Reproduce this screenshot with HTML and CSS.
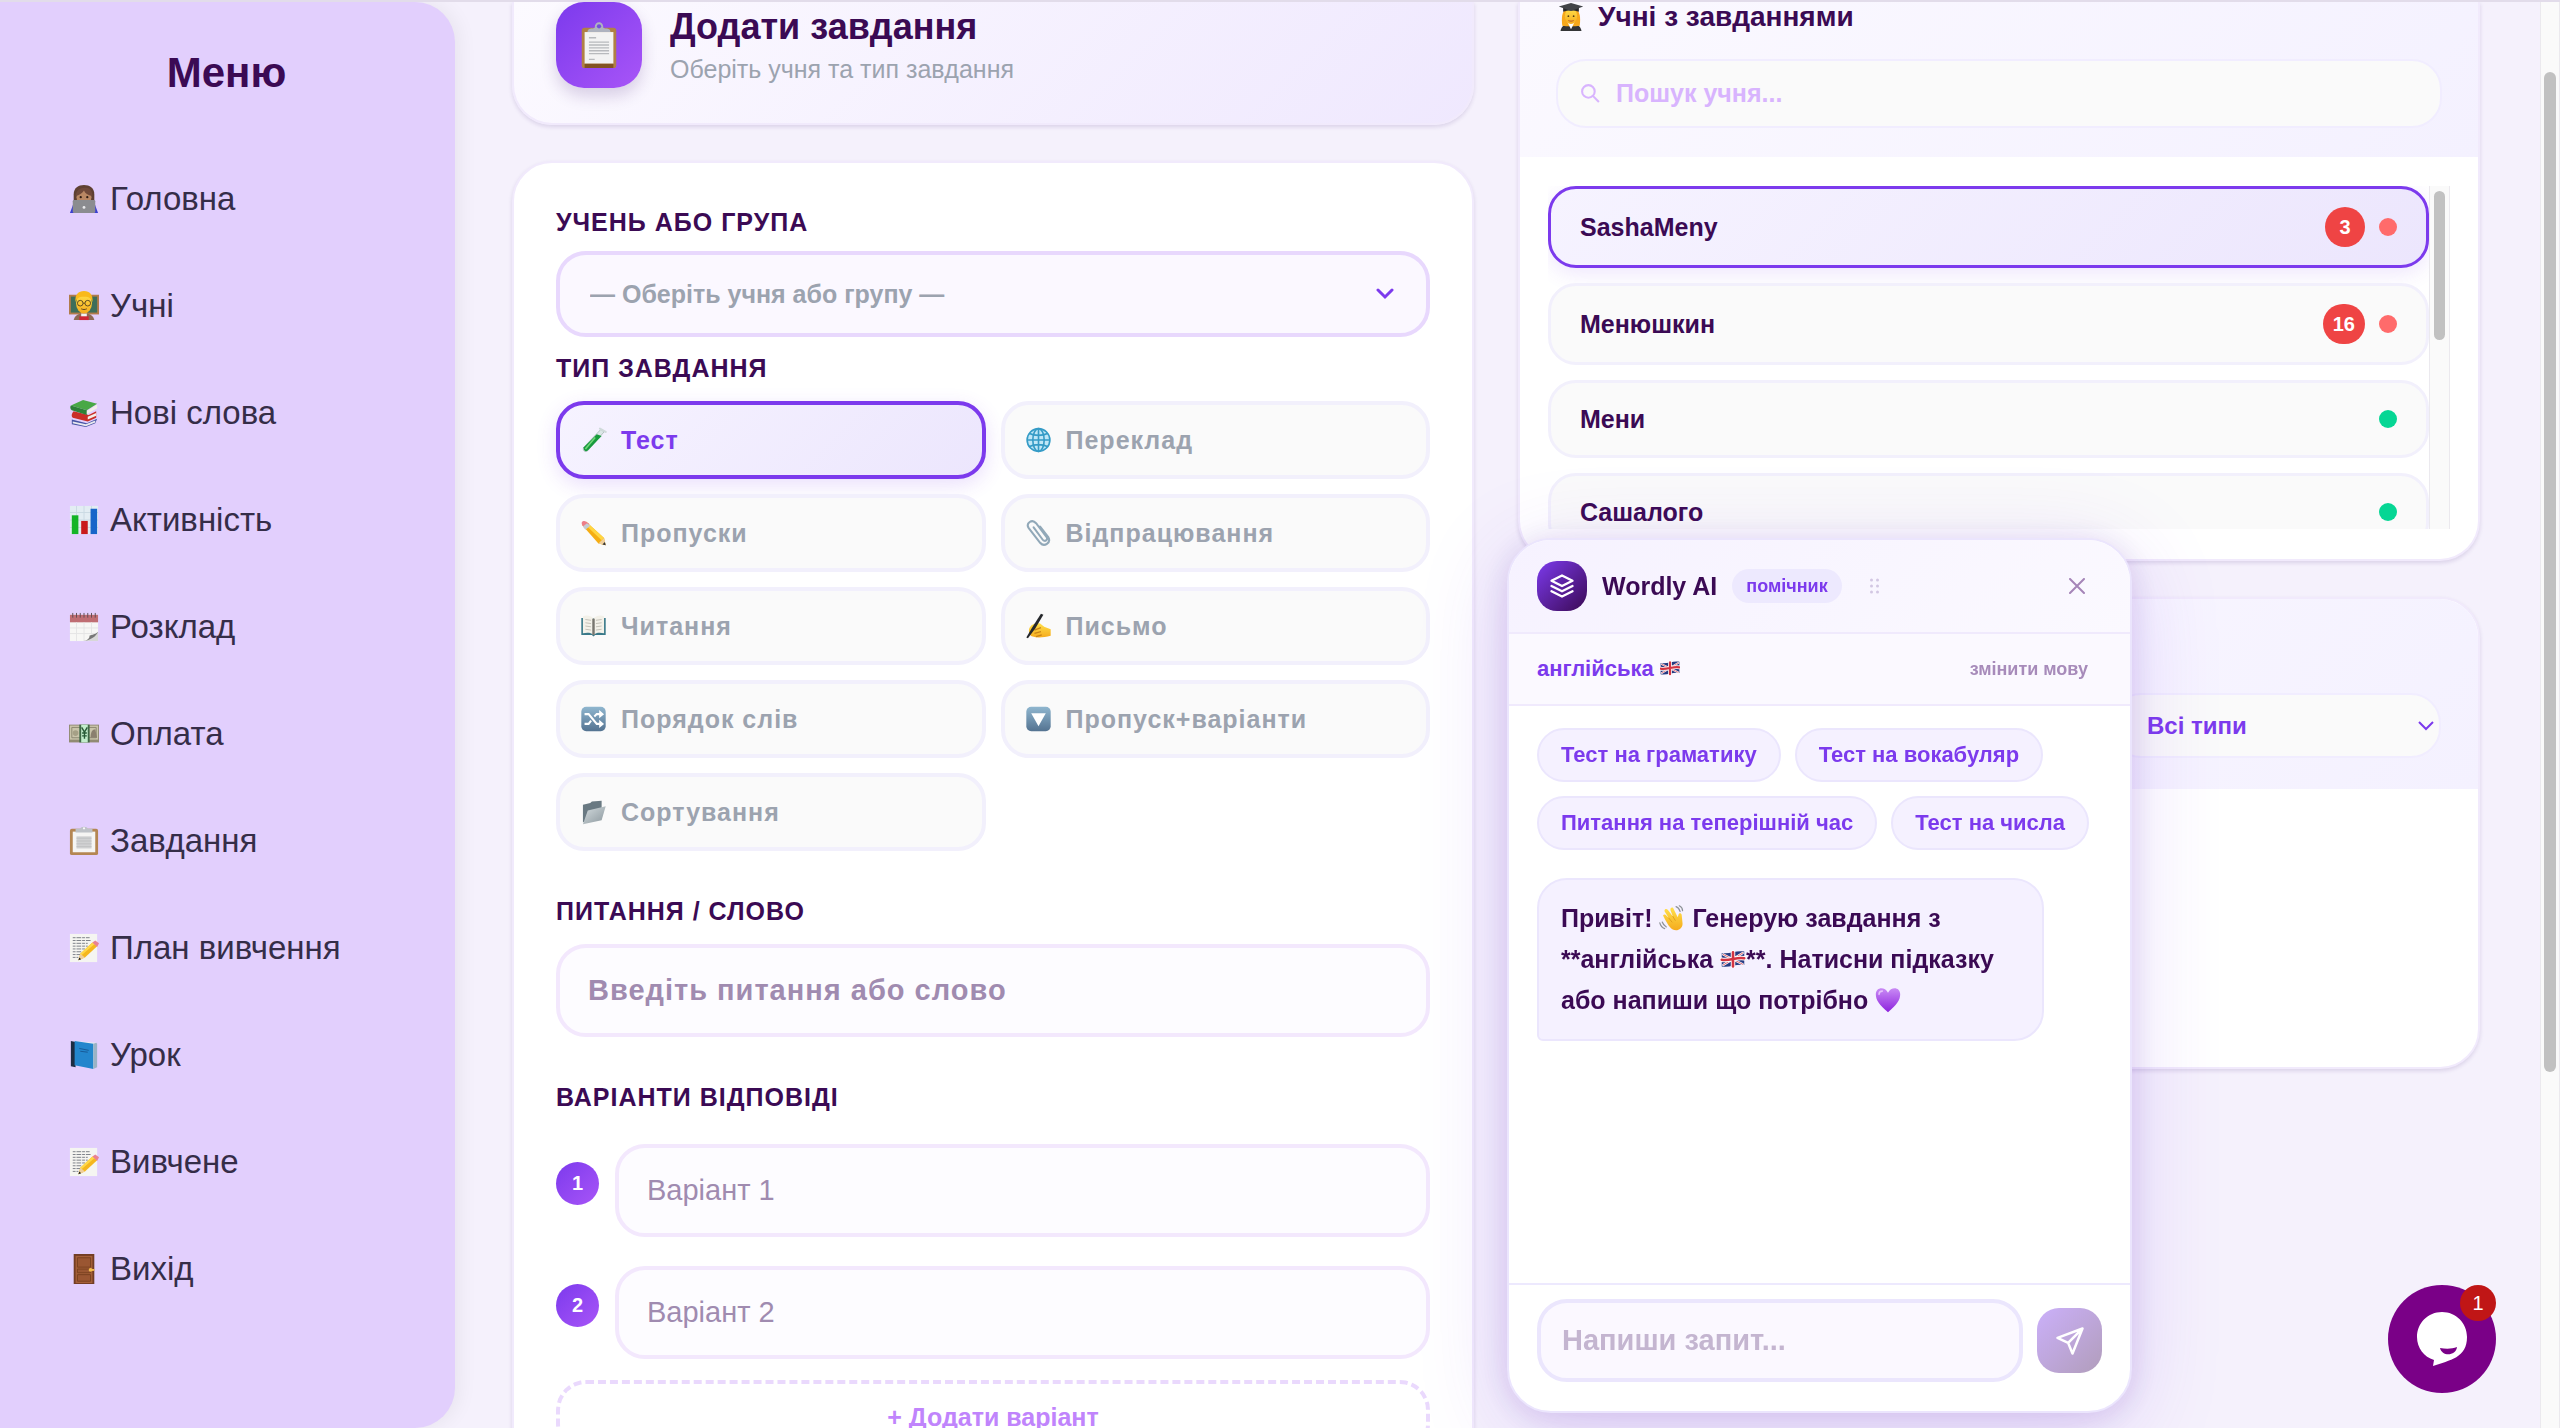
FILE: index.html
```html
<!DOCTYPE html>
<html lang="uk">
<head>
  <meta charset="UTF-8">
  <title>Завдання</title>
  <link rel="stylesheet" href="styles.css">
</head>
<body>
  <!-- Іконки -->
  <svg class="sprite" aria-hidden="true">
    <defs>
      <linearGradient id="g-skin" x1="0" y1="0" x2="0" y2="1"><stop offset="0" stop-color="#ffe04a"/><stop offset="1" stop-color="#f5ab1d"/></linearGradient>
      <linearGradient id="g-steel" x1="0" y1="0" x2="0" y2="1"><stop offset="0" stop-color="#8fb6cf"/><stop offset="1" stop-color="#547391"/></linearGradient>
      <linearGradient id="g-folder" x1="0" y1="0" x2="1" y2="1"><stop offset="0" stop-color="#d5dde0"/><stop offset="1" stop-color="#8b979d"/></linearGradient>
      <linearGradient id="g-heart" x1="0" y1="0" x2="0" y2="1"><stop offset="0" stop-color="#c98af5"/><stop offset="1" stop-color="#8d22dd"/></linearGradient>
    </defs>
    <symbol id="i-home" viewBox="0 0 32 32">
      <path d="M1 31l3-8 5-4h14l5 4 3 8z" fill="#3a3fd0"/>
      <path d="M5 18V11C5 4 10 1 16 1s11 3 11 10v7z" fill="#5f4032"/>
      <ellipse cx="16" cy="14" rx="8" ry="9" fill="#b98764"/>
      <path d="M7 13C8 5 13 4 18 4c5 0 7 4 7 9-5-1-8-3-9-6-2 3-5 5-9 6z" fill="#70493a"/>
      <circle cx="12.500" cy="14" r="1.200" fill="#2c1a12"/><circle cx="19.500" cy="14" r="1.200" fill="#2c1a12"/>
      <rect x="4" y="17" width="24" height="14" rx="1.500" fill="#8b8c90"/>
      <circle cx="16" cy="25" r="1.500" fill="#e9e9ec"/>
    </symbol>
    <symbol id="i-teacher" viewBox="0 0 32 32">
      <rect x="0" y="4" width="32" height="21" fill="#b17b4b"/>
      <rect x="2" y="6" width="28" height="17" fill="#3d6e5a"/>
      <path d="M5 31c1-5 5-7 11-7s10 2 11 7z" fill="#8d6a55"/>
      <path d="M13 24h6v7h-6z" fill="#f2f2f2"/><rect x="11" y="27" width="10" height="4" fill="#cf2635"/>
      <ellipse cx="16" cy="13" rx="8.500" ry="11" fill="url(#g-skin)"/>
      <path d="M7 12C6 4 10 0 16 0s10 4 9 12c-1-4-3-6-9-6s-8 2-9 6z" fill="#f9b91b"/>
      <g fill="none" stroke="#5a4420" stroke-width="1"><circle cx="12" cy="13" r="3"/><circle cx="20" cy="13" r="3"/><path d="M15 13h2M13 19c2 1 4 1 6 0"/></g>
    </symbol>
    <symbol id="i-books" viewBox="0 0 32 32">
      <path d="M3 23l16 4 11-5-2 5-10 4-15-3z" fill="#4754a5"/>
      <path d="M4 25l14 3 10-4v2l-10 4-14-3z" fill="#e9e9ef"/>
      <path d="M5 14l16 4 8-4v7l-9 4-16-4c-2-2-1-5 1-7z" fill="#c92d27"/>
      <path d="M20 20l9-4v3l-9 4z" fill="#f3efe9"/>
      <path d="M2 8L15 2l15 4-11 7z" fill="#48a845"/>
      <path d="M2 8l17 5v5L3 13c-2-1-2-4-1-5z" fill="#2d8137"/>
      <path d="M19 14l11-7v4l-11 6z" fill="#f3efe9"/>
    </symbol>
    <symbol id="i-chart" viewBox="0 0 32 32">
      <rect x="1" y="1" width="30" height="30" fill="#e3edf3"/>
      <path d="M1 8h30M1 16h30M1 24h30M8 1v30M16 1v30M24 1v30" stroke="#cadae2"/>
      <rect x="3" y="11" width="7" height="20" fill="#14b427"/><rect x="13" y="17" width="7" height="14" fill="#c91b1d"/><rect x="23" y="4" width="7" height="27" fill="#1765c9"/>
    </symbol>
    <symbol id="i-calendar" viewBox="0 0 32 32">
      <rect x="1" y="3" width="30" height="28" fill="#f7f7f5"/>
      <path d="M1 3h30v8H1z" fill="#bf6d73"/>
      <path d="M4 1v5M8 1v5M12 1v5M16 1v5M20 1v5M24 1v5M28 1v5" stroke="#5d4b51"/>
      <path d="M1 17h30M1 23h30M8 11v20M16 11v20M24 11v20" stroke="#e4e4e4"/>
      <path d="M15 31c8-1 9-4 16-10v10z" fill="#d7d7d7"/><path d="M16 31c8-2 12-4 15-10-3 3-6 3-9 4 0 3-2 5-6 6z" fill="#777"/>
    </symbol>
    <symbol id="i-money" viewBox="0 0 32 32">
      <path d="M0 6h32v19H0z" fill="#918b73"/><path d="M1 7h30v15H1z" fill="#c9c4aa"/>
      <path d="M3 9h26v11H3z" fill="none" stroke="#8a866f"/>
      <circle cx="7" cy="15" r="3" fill="#a5a086"/><path d="M23 20c0-6 2-9 5-9l2 9z" fill="#8b806f"/>
      <path d="M11 6h11v19H11z" fill="#3e6846"/><path d="M13 6h7v19h-7z" fill="#c2edcb"/>
      <path d="M13.500 9l3 5 3-5M16.500 14v7M14 15h5M14 18h5" fill="none" stroke="#285b37" stroke-width="1.500"/>
    </symbol>
    <symbol id="i-clipboard" viewBox="0 0 32 32">
      <rect x="1" y="3" width="30" height="28" rx="2" fill="#b48652"/>
      <rect x="4" y="6" width="24" height="22" fill="#f5f5f3"/>
      <path d="M8 11h16v13H8z" fill="#d0d1d2"/><path d="M8 13h16M8 16h16M8 19h16M8 22h16" stroke="#bfc0c1"/>
      <path d="M7 3h5c0-3 8-3 8 0h5v4H7z" fill="#bec2c7"/><circle cx="16" cy="2.500" r="1.200" fill="#f8f8f8"/>
    </symbol>
    <symbol id="i-board" viewBox="0 0 32 32">
      <rect x="4" y="4" width="24" height="28" rx="2" fill="#b08045"/><rect x="6" y="7" width="20" height="22" fill="#f3f3f3"/>
      <path d="M6 29h20v3H6z" fill="#835322"/>
      <path d="M9 11h5M9 14h14M9 16h14M9 18h14M9 20h14M9 22h14M9 26h4" stroke="#b8babd"/>
      <path d="M8 7c0-3 3-2 5-3 0-5 6-5 6 0 2 1 5 0 5 3z" fill="#aeb3bf"/><circle cx="16" cy="3" r="1.500" fill="#7350d9"/>
    </symbol>
    <symbol id="i-memo" viewBox="0 0 32 32">
      <rect x="1" y="1" width="29" height="30" fill="#f5f5f1"/>
      <path d="M4 5h18M4 8h20M4 11h16M4 14h16M4 17h13M4 20h9M4 23h8M4 26h6" stroke="#777c83" stroke-dasharray="3 1 5 1"/>
      <path d="M10 29l2-7L25 10l5 4-13 12z" fill="#f5b71e"/><path d="M12 22L25 10l2 2-14 12z" fill="#ffd849"/>
      <path d="M25 10l3-2 4 3-2 4z" fill="#e98192"/><path d="M10 29l2-7 5 4z" fill="#efcf9b"/><path d="M10 29l1-3 2 2z" fill="#222"/>
    </symbol>
    <symbol id="i-book" viewBox="0 0 32 32">
      <path d="M2 1l5 1v27l-5-1z" fill="#1c2d43"/><path d="M6 1l23 2v26l-3 2z" fill="#e9edf0"/>
      <path d="M6 1l20 3v27L6 27z" fill="#2386cd"/><path d="M26 4l3-1 1 1v25l-4 2z" fill="#9bb3c5"/>
      <path d="M11 9l10 2M12 12l8 1" stroke="#165894"/>
    </symbol>
    <symbol id="i-door" viewBox="0 0 32 32">
      <path d="M5 0h22v32H5z" fill="#733d24"/><path d="M7 2h18v29H7z" fill="#a45f39"/>
      <path d="M9 4h14v10H9zM9 16h14v4H9zM9 22h14v7H9z" fill="#9a5632" stroke="#77401f"/>
      <path d="M22 17h5" stroke="#f4bd4e" stroke-width="2"/><circle cx="23" cy="17" r="2" fill="#f4bd4e"/>
    </symbol>
    <symbol id="i-tube" viewBox="0 0 32 32">
      <path d="M25 3l4 3L9 29c-3 3-7 0-5-4z" fill="#dce7e7" stroke="#a9b8b8"/>
      <path d="M20 9l6 2L9 29c-3 2-6 0-5-4z" fill="#189b3d"/><path d="M18 13L6 27" stroke="#71d779" stroke-width="2"/>
      <path d="M24 2l7 4" stroke="#d0dada" stroke-width="2.500" stroke-linecap="round"/>
    </symbol>
    <symbol id="i-globe" viewBox="0 0 32 32">
      <circle cx="16" cy="16" r="14.500" fill="#bfe7f7"/>
      <g fill="none" stroke="#359bc6" stroke-width="2"><circle cx="16" cy="16" r="14"/><ellipse cx="16" cy="16" rx="7" ry="14"/><path d="M16 2v28M2 16h28M5 8c6 3 16 3 22 0M5 24c6-3 16-3 22 0"/></g>
    </symbol>
    <symbol id="i-pencil" viewBox="0 0 32 32">
      <path d="M2 6l5-4 22 20 2 9-9-2z" fill="#f5ad13"/><path d="M7 2l22 20-3 3L4 4z" fill="#ffd540"/>
      <path d="M2 6C0 2 4 0 7 2l4 3-6 5z" fill="#ed7d88"/><path d="M8 4l4 3-6 5-3-4z" fill="#c5cbd1"/>
      <path d="M22 29l7-7 2 9z" fill="#efcf9c"/><path d="M27 30l3-3 1 4z" fill="#333"/>
    </symbol>
    <symbol id="i-clip" viewBox="0 0 32 32">
      <path d="M10 9l11 15c3 4 7 0 5-3L13 4C8-2 0 4 4 10l14 18c5 6 14 0 10-7L18 8" fill="none" stroke="#91a8b8" stroke-width="2.500" stroke-linecap="round"/>
    </symbol>
    <symbol id="i-open" viewBox="0 0 32 32">
      <path d="M1 6h30v21H18l-2 2-2-2H1z" fill="#397989"/><path d="M3 4c6-2 11 0 13 3v20c-3-3-8-3-13-2zM29 4c-6-2-11 0-13 3v20c3-3 8-3 13-2z" fill="#f3f1e9"/>
      <path d="M16 7v20" stroke="#77756f" stroke-width="3"/><path d="M6 8l7 1M6 12l7 1M6 16l7 1M6 20l7 1M26 8l-7 1M26 12l-7 1M26 16l-7 1M26 20l-7 1" stroke="#b9b6ad"/>
    </symbol>
    <symbol id="i-write" viewBox="0 0 32 32">
      <path d="M5 18c3-5 9-6 13-5l5 4 8 3v8c-8 2-16 3-22 1-4-1-6-7-4-11z" fill="url(#g-skin)"/>
      <path d="M11 21l8-3M11 25l8-2M13 29l7-2" stroke="#c98317" stroke-width="1.500"/>
      <path d="M19 1l3 1-10 17-9 12-2-1 7-12z" fill="#25272b"/>
    </symbol>
    <symbol id="i-shuffle" viewBox="0 0 32 32">
      <rect x="1" y="1" width="30" height="30" rx="6" fill="url(#g-steel)"/>
      <path d="M5 10h5l10 12h4M5 22h5l3-4M17 13l3-3h4" fill="none" stroke="#fff" stroke-width="2.500"/><path d="M23 5l6 5-6 5zM23 17l6 5-6 5z" fill="#fff"/>
    </symbol>
    <symbol id="i-down" viewBox="0 0 32 32">
      <rect x="1" y="1" width="30" height="30" rx="6" fill="url(#g-steel)"/><path d="M7 9h18l-9 16z" fill="#fff"/>
    </symbol>
    <symbol id="i-folder" viewBox="0 0 32 32">
      <path d="M3 7l9-2 2-2 12-1v11L3 29z" fill="#697982"/><path d="M9 14l22-5-5 17L3 31z" fill="url(#g-folder)"/>
    </symbol>
    <symbol id="i-graduate" viewBox="0 0 32 32">
      <path d="M4 32c1-6 5-8 12-8s11 2 12 8z" fill="#343537"/><path d="M6 26C5 16 5 6 16 6s11 10 10 20c-5 1-15 1-20 0z" fill="#f7a81b"/>
      <path d="M12 22h8l-4 8z" fill="#fff"/><ellipse cx="16" cy="15" rx="7" ry="9" fill="url(#g-skin)"/>
      <path d="M7 4h18v6c-5-2-13-2-18 0z" fill="#292a2d"/><path d="M16 0l14 4-14 5L2 4z" fill="#424448"/>
      <circle cx="13" cy="15" r="1" fill="#543b10"/><circle cx="19" cy="15" r="1" fill="#543b10"/><path d="M13 20c2 1 4 1 6 0" stroke="#ac482c" fill="none"/>
    </symbol>
    <symbol id="i-flag" viewBox="0 0 32 24">
      <path d="M1 4c10 2 20-4 30-2v18c-10-2-20 4-30 2z" fill="#263b82"/>
      <path d="M3 6l26 13M3 20L29 4" stroke="#fff" stroke-width="3"/><path d="M3 6l26 13M3 20L29 4" stroke="#d43442" stroke-width="1"/>
      <path d="M16 3v19M1 13c10 2 20-4 30-2" fill="none" stroke="#fff" stroke-width="6"/><path d="M16 3v19M1 13c10 2 20-4 30-2" fill="none" stroke="#d43442" stroke-width="3.500"/>
    </symbol>
    <symbol id="i-wave" viewBox="0 0 32 32">
      <path d="M5 13c1-2 3-1 4 0l3 3L7 8c-1-3 2-4 4-2l6 8-3-8c0-3 3-4 4-1l5 10 1-3c1-3 4-2 4 1l1 10c0 5-4 8-8 8-6 0-9-4-16-18z" fill="url(#g-skin)"/>
      <path d="M12 16l4 5M17 14l3 5" stroke="#dc971a"/><path d="M21 2c3 1 4 3 5 6M25 1c2 1 4 4 4 6M1 22c1 4 3 6 6 7M4 21c1 3 3 5 5 6" fill="none" stroke="#8d9297" stroke-width="1.500"/>
    </symbol>
    <symbol id="i-heart" viewBox="0 0 32 32">
      <path d="M16 31C5 22 1 16 1 9 1 0 12-1 16 7c4-8 15-7 15 2 0 7-4 13-15 22z" fill="url(#g-heart)"/><path d="M5 9c0-3 2-4 4-4" fill="none" stroke="#e5c2fc" stroke-width="2" stroke-linecap="round"/>
    </symbol>
  </svg>

  <div class="page">
    <nav class="sidebar">
      <h2 class="sidebar-title">Меню</h2>
      <ul class="menu">
        <li><a href="#"><svg class="emoji"><use href="#i-home"/></svg>Головна</a></li>
        <li><a href="#"><svg class="emoji"><use href="#i-teacher"/></svg>Учні</a></li>
        <li><a href="#"><svg class="emoji"><use href="#i-books"/></svg>Нові слова</a></li>
        <li><a href="#"><svg class="emoji"><use href="#i-chart"/></svg>Активність</a></li>
        <li><a href="#"><svg class="emoji"><use href="#i-calendar"/></svg>Розклад</a></li>
        <li><a href="#"><svg class="emoji"><use href="#i-money"/></svg>Оплата</a></li>
        <li><a href="#"><svg class="emoji"><use href="#i-clipboard"/></svg>Завдання</a></li>
        <li><a href="#"><svg class="emoji"><use href="#i-memo"/></svg>План вивчення</a></li>
        <li><a href="#"><svg class="emoji"><use href="#i-book"/></svg>Урок</a></li>
        <li><a href="#"><svg class="emoji"><use href="#i-memo"/></svg>Вивчене</a></li>
        <li><a href="#"><svg class="emoji"><use href="#i-door"/></svg>Вихід</a></li>
      </ul>
    </nav>

    <main class="content">
      <div class="column">
        <header class="card card-top task-header">
          <div class="task-icon"><svg><use href="#i-board"/></svg></div>
          <div>
            <h1>Додати завдання</h1>
            <p>Оберіть учня та тип завдання</p>
          </div>
        </header>

        <form class="card task-form">
          <label class="label" for="student">УЧЕНЬ АБО ГРУПА</label>
          <select class="field student-select" id="student">
            <option>— Оберіть учня або групу —</option>
          </select>

          <h3 class="label label-type">ТИП ЗАВДАННЯ</h3>
          <div class="types">
            <button type="button" class="type active"><svg><use href="#i-tube"/></svg>Тест</button>
            <button type="button" class="type"><svg><use href="#i-globe"/></svg>Переклад</button>
            <button type="button" class="type"><svg><use href="#i-pencil"/></svg>Пропуски</button>
            <button type="button" class="type"><svg><use href="#i-clip"/></svg>Відпрацювання</button>
            <button type="button" class="type"><svg><use href="#i-open"/></svg>Читання</button>
            <button type="button" class="type"><svg><use href="#i-write"/></svg>Письмо</button>
            <button type="button" class="type"><svg><use href="#i-shuffle"/></svg>Порядок слів</button>
            <button type="button" class="type"><svg><use href="#i-down"/></svg>Пропуск+варіанти</button>
            <button type="button" class="type"><svg><use href="#i-folder"/></svg>Сортування</button>
          </div>

          <label class="label label-section" for="question">ПИТАННЯ / СЛОВО</label>
          <input class="field question" id="question" type="text" placeholder="Введіть питання або слово">

          <h3 class="label label-section">ВАРІАНТИ ВІДПОВІДІ</h3>
          <div class="answers">
            <div class="answer">
              <label class="num" for="answer1">1</label>
              <input class="field" id="answer1" type="text" placeholder="Варіант 1">
            </div>
            <div class="answer">
              <label class="num" for="answer2">2</label>
              <input class="field" id="answer2" type="text" placeholder="Варіант 2">
            </div>
          </div>
          <button type="button" class="add-answer">+ Додати варіант</button>
        </form>
      </div>

      <div class="column">
        <section class="card card-top">
          <div class="panel-header">
            <h2><svg><use href="#i-graduate"/></svg>Учні з завданнями</h2>
            <label class="search">
              <svg viewBox="0 0 20 20"><circle cx="8" cy="8" r="6"/><path d="M12.500 12.500L18 18"/></svg>
              <input type="search" aria-label="Пошук учня" placeholder="Пошук учня...">
            </label>
          </div>
          <div class="students">
            <ul class="student-list">
              <li class="student selected"><span class="name">SashaMeny</span><span class="count">3</span><span class="dot"></span></li>
              <li class="student"><span class="name">Менюшкин</span><span class="count">16</span><span class="dot"></span></li>
              <li class="student"><span class="name">Мени</span><span class="dot green"></span></li>
              <li class="student"><span class="name">Сашалого</span><span class="dot green"></span></li>
            </ul>
            <div class="track"><div class="thumb"></div></div>
          </div>
        </section>

        <section class="card results">
          <div class="results-header">
            <select class="type-filter" aria-label="Тип завдання">
              <option>Всі типи</option>
            </select>
          </div>
        </section>
      </div>
    </main>

    <div class="track page-track"><div class="thumb"></div></div>
  </div>

  <!-- AI помічник -->
  <aside class="ai">
    <header class="ai-header">
      <div class="ai-logo">
        <svg viewBox="0 0 24 24"><path d="M12 3L3 7.500l9 4.500 9-4.500zM3 12l9 4.500 9-4.500M3 16.500l9 4.500 9-4.500"/></svg>
      </div>
      <h2>Wordly AI</h2>
      <span class="ai-badge">помічник</span>
      <svg class="drag" viewBox="0 0 10 16"><circle cx="2" cy="2" r="1.500"/><circle cx="8" cy="2" r="1.500"/><circle cx="2" cy="8" r="1.500"/><circle cx="8" cy="8" r="1.500"/><circle cx="2" cy="14" r="1.500"/><circle cx="8" cy="14" r="1.500"/></svg>
      <button type="button" class="close" aria-label="Закрити"><svg viewBox="0 0 16 16"><path d="M1 1l14 14M15 1L1 15"/></svg></button>
    </header>
    <div class="ai-lang">
      <span>англійська <svg><use href="#i-flag"/></svg></span>
      <button type="button">змінити мову</button>
    </div>
    <div class="ai-body">
      <div class="chips">
        <button type="button">Тест на граматику</button>
        <button type="button">Тест на вокабуляр</button>
        <button type="button">Питання на теперішній час</button>
        <button type="button">Тест на числа</button>
      </div>
      <p class="message">Привіт! <svg class="mark"><use href="#i-wave"/></svg> Генерую завдання з<br>**англійська <svg class="mark flag"><use href="#i-flag"/></svg>**. Натисни підказку<br>або напиши що потрібно <svg class="mark"><use href="#i-heart"/></svg></p>
    </div>
    <form class="ai-form">
      <input type="text" aria-label="Запит" placeholder="Напиши запит...">
      <button type="button" aria-label="Надіслати">
        <svg viewBox="0 0 24 24"><path d="M22 2L2 9.500l8.500 4L14 22zM22 2L10.500 13.500"/></svg>
      </button>
    </form>
  </aside>

  <button type="button" class="chat" aria-label="Чат">
    <svg viewBox="0 0 108 108">
      <path d="M54 27c14 0 25 11 25 25 0 21-17 23-34 29l1-6C36 72 29 63 29 52c0-14 11-25 25-25z" fill="#fff"/>
      <path d="M52 63c6 1 12 1 17-1-1 9-15 10-17 1z" fill="#7a0087"/>
    </svg>
    <span class="chat-count">1</span>
  </button>
</body>
</html>
```

FILE: styles.css
```css
* {
  box-sizing: border-box;
}
body {
  margin: 0;
  overflow: hidden;
  background-color: #f5f1fc;
  color: #3b0a54;
  font-family: "Liberation Sans", Arial, sans-serif;
  font-size: 25px;
}
h1, h2, h3, p, ul {
  margin: 0;
  padding: 0;
}
ul {
  list-style: none;
}
button, input, select {
  font-family: inherit;
  font-size: inherit;
  font-weight: bold;
}
button {
  cursor: pointer;
}
.sprite {
  position: absolute;
  width: 0;
  height: 0;
}
.page {
  display: grid;
  grid-template-columns: 455px 1fr 20px;
  grid-template-rows: 100%;
  height: 100vh;
  border-top: 2px solid #e2dcea;
  overflow: hidden;
}

/* Меню */
.sidebar {
  padding: 45px 68px 45px 66px;
  background-color: #e2cffd;
  border-radius: 0 40px 40px 0;
  box-shadow: 4px 0 20px rgba(0, 0, 0, 0.06);
}
.sidebar-title {
  margin-bottom: 75px;
  font-size: 42px;
  line-height: 52px;
  text-align: center;
}
.menu {
  display: grid;
  gap: 57px;
}
.menu a {
  display: flex;
  align-items: center;
  gap: 8px;
  color: #352d48;
  font-size: 33px;
  line-height: 50px;
  text-decoration: none;
  white-space: nowrap;
}
.emoji {
  width: 36px;
  height: 30px;
}

/* Основна частина */
.content {
  display: grid;
  grid-template-columns: 1fr 1fr;
  gap: 44px;
  min-height: 0;
  padding: 0 60px 0 57px;
}
.column {
  min-width: 0;
}
.card {
  background-color: #fff;
  border: 2px solid #f1eafc;
  border-radius: 40px;
  box-shadow: 0 2px 4px rgba(60, 20, 110, 0.14);
  overflow: hidden;
}
.card-top {
  border-top: 0;
  border-radius: 0 0 40px 40px;
}
.task-header {
  display: flex;
  align-items: flex-start;
  gap: 28px;
  padding: 0 42px 35px;
  background: linear-gradient(135deg, #fcfaff, #efe8fe);
}
.task-icon {
  display: grid;
  place-items: center;
  width: 86px;
  height: 86px;
  background: linear-gradient(135deg, #7c3aed, #a855f7);
  border-radius: 28px;
  box-shadow: 0 8px 16px rgba(60, 20, 110, 0.18);
}
.task-icon svg {
  width: 46px;
  height: 46px;
}
.task-header h1 {
  font-size: 36px;
  line-height: 50px;
}
.task-header p {
  color: #9ca3af;
  line-height: 34px;
}
.task-form {
  margin-top: 36px;
  padding: 44px 42px;
}
.label {
  display: block;
  margin-bottom: 14px;
  font-size: 25px;
  font-weight: bold;
  letter-spacing: 1px;
  line-height: 30px;
}
.field {
  display: block;
  width: 100%;
  padding: 0 30px;
  background-color: #fdfcff;
  border: 4px solid #f3e8fd;
  border-radius: 30px;
  color: #3b0a54;
  font-size: 29px;
  font-weight: normal;
  line-height: 33px;
}
input.field {
  height: 93px;
  padding: 0 28px;
}
.field::placeholder {
  color: #a08bb0;
  opacity: 1;
}
.student-select {
  height: 86px;
  background: #fbf8ff url("data:image/svg+xml,%3Csvg xmlns='http://www.w3.org/2000/svg' width='18' height='12'%3E%3Cpath d='M2 2l7 7 7-7' fill='none' stroke='%237c3aed' stroke-width='3' stroke-linecap='round'/%3E%3C/svg%3E") no-repeat right 32px center;
  border-color: #e8d8fd;
  color: #9ca3af;
  font-size: 25px;
  font-weight: bold;
  appearance: none;
}
.label-type {
  margin-top: 16px;
  margin-bottom: 18px;
}
.label-section {
  margin-top: 45px;
  margin-bottom: 18px;
}
.types {
  display: grid;
  grid-template-columns: 1fr 1fr;
  gap: 15px;
}
.type {
  display: flex;
  align-items: center;
  gap: 14px;
  height: 78px;
  padding: 0 20px;
  background-color: #fafafa;
  border: 4px solid #f2f0fc;
  border-radius: 28px;
  color: #9ca3af;
  font-size: 25px;
  letter-spacing: 1px;
}
.type svg {
  width: 27px;
  height: 26px;
}
.type.active {
  background: linear-gradient(135deg, #f6f3ff, #ece6fd);
  border-color: #7c3aed;
  box-shadow: 0 6px 20px rgba(124, 58, 237, 0.16);
  color: #7c3aed;
}
.question::placeholder {
  font-weight: bold;
  letter-spacing: 1px;
}
.answers {
  display: grid;
  gap: 29px;
  margin: 32px 0 21px;
}
.answer {
  display: flex;
  align-items: flex-start;
  gap: 16px;
}
.num {
  flex: none;
  width: 43px;
  margin-top: 18px;
  background: linear-gradient(135deg, #7c3aed, #a855f7);
  border-radius: 50%;
  color: #fff;
  font-size: 20px;
  font-weight: bold;
  line-height: 43px;
  text-align: center;
}
.add-answer {
  width: 100%;
  height: 74px;
  background: none;
  border: 4px dashed #ead9fd;
  border-radius: 30px;
  color: #c084fc;
}

/* Учні */
.panel-header {
  padding: 0 36px 29px;
  background: linear-gradient(135deg, #fbf9ff, #f4f1ff);
}
.panel-header h2 {
  display: flex;
  align-items: center;
  gap: 12px;
  margin-bottom: 27px;
  font-size: 28px;
  line-height: 30px;
}
.panel-header h2 svg {
  width: 30px;
  height: 28px;
}
.search {
  display: flex;
  align-items: center;
  gap: 15px;
  height: 69px;
  padding: 0 22px;
  background-color: #fafafa;
  border: 2px solid #f1edff;
  border-radius: 30px;
}
.search svg {
  width: 21px;
  height: 21px;
  fill: none;
  stroke: #d8b4fe;
  stroke-width: 2;
}
.search input {
  flex: 1;
  padding: 0;
  background: none;
  border: 0;
}
.search input::placeholder {
  color: #d8b4fe;
  opacity: 1;
}
.students {
  display: flex;
  height: 402px;
  padding: 29px 28px 30px;
}
.student-list {
  flex: 1;
  overflow: hidden;
}
.student {
  display: flex;
  align-items: center;
  gap: 14px;
  margin-bottom: 15px;
  padding: 18px 29px;
  background-color: #fafafa;
  border: 3px solid #f2f0fc;
  border-radius: 28px;
  font-weight: bold;
  line-height: 36px;
}
.student.selected {
  background: linear-gradient(135deg, #f6f3ff, #ece6fd);
  border-color: #7c3aed;
  box-shadow: 0 6px 20px rgba(124, 58, 237, 0.12);
}
.name {
  flex: 1;
}
.count {
  min-width: 40px;
  padding: 0 10px;
  background-color: #ef4444;
  border-radius: 20px;
  color: #fff;
  font-size: 20px;
  line-height: 40px;
  text-align: center;
}
.dot {
  width: 18px;
  height: 18px;
  background-color: #ff6b6b;
  border-radius: 50%;
}
.dot.green {
  background-color: #06d694;
}
.track {
  width: 21px;
  padding: 5px 4px;
  background-color: #fafafa;
  border: solid #ebe9ee;
  border-width: 0 1px;
}
.thumb {
  height: 149px;
  background-color: #c1c1c1;
  border-radius: 6px;
}
.page-track {
  width: 20px;
  padding: 70px 3px;
}
.page-track .thumb {
  height: 1000px;
}

/* Результати */
.results {
  min-height: 472px;
  margin-top: 36px;
}
.results-header {
  display: flex;
  justify-content: flex-end;
  padding: 94px 37px 31px;
  background: linear-gradient(135deg, #fbf9ff, #f4f1ff);
}
.type-filter {
  width: 330px;
  height: 65px;
  padding: 0 34px;
  background: #fafafa url("data:image/svg+xml,%3Csvg xmlns='http://www.w3.org/2000/svg' width='18' height='12'%3E%3Cpath d='M2 2l7 7 7-7' fill='none' stroke='%237c3aed' stroke-width='2'/%3E%3C/svg%3E") no-repeat right 4px center;
  border: 2px solid #f1edff;
  border-radius: 30px;
  color: #7c3aed;
  font-size: 24px;
  appearance: none;
}

/* AI помічник */
.ai {
  position: fixed;
  right: 428px;
  bottom: 15px;
  display: flex;
  flex-direction: column;
  width: 625px;
  height: 875px;
  background-color: #fff;
  border: 2px solid #ebe5fd;
  border-radius: 44px;
  box-shadow: 0 16px 90px rgba(124, 58, 237, 0.18), 0 4px 30px rgba(80, 20, 140, 0.14);
  overflow: hidden;
}
.ai-header {
  display: flex;
  align-items: center;
  padding: 21px 45px 21px 28px;
  background: linear-gradient(135deg, #f6f2ff, #fbf9ff);
  border-bottom: 2px solid #f0eafd;
}
.ai-logo {
  display: grid;
  place-items: center;
  width: 50px;
  height: 50px;
  background: linear-gradient(135deg, #7c3aed, #3b0a54);
  border-radius: 20px;
}
.ai svg {
  fill: none;
  stroke-linecap: round;
  stroke-linejoin: round;
}
.ai-logo svg {
  width: 28px;
  height: 28px;
  stroke: #fff;
  stroke-width: 2;
}
.ai-header h2 {
  margin: 0 15px;
  font-size: 25px;
}
.ai-badge {
  padding: 0 14px;
  background-color: #ede9fe;
  border-radius: 17px;
  color: #7c3aed;
  font-size: 18px;
  font-weight: bold;
  line-height: 34px;
}
.ai .drag {
  width: 11px;
  height: 16px;
  margin-left: 27px;
  fill: #d3c7e3;
}
.close {
  width: 16px;
  height: 16px;
  margin-left: auto;
  padding: 0;
  background: none;
  border: 0;
}
.close svg {
  display: block;
  stroke: #a585b8;
  stroke-width: 2;
}
.ai-lang {
  display: flex;
  align-items: center;
  justify-content: space-between;
  padding: 16px 42px 16px 28px;
  background-color: #fbf9ff;
  border-bottom: 2px solid #f0eafd;
  color: #7c3aed;
  font-size: 22px;
  font-weight: bold;
  line-height: 38px;
}
.ai-lang svg {
  width: 20px;
  height: 16px;
}
.ai-lang button {
  padding: 0;
  background: none;
  border: 0;
  color: #a78bba;
  font-size: 18px;
}
.ai-body {
  flex: 1;
  padding: 22px 28px;
}
.chips {
  display: flex;
  flex-wrap: wrap;
  gap: 14px;
}
.chips button {
  height: 54px;
  padding: 0 22px;
  background-color: #f5f1ff;
  border: 2px solid #ebe6fd;
  border-radius: 27px;
  color: #7c3aed;
  font-size: 22px;
}
.message {
  width: fit-content;
  margin-top: 28px;
  padding: 18px 48px 18px 22px;
  background-color: #f5f1ff;
  border: 2px solid #ebe6fd;
  border-radius: 30px 30px 30px 6px;
  font-weight: bold;
  line-height: 41px;
}
.mark {
  width: 26px;
  height: 26px;
  vertical-align: -4px;
}
.mark.flag {
  height: 18px;
  vertical-align: 0;
}
.ai-form {
  display: flex;
  align-items: center;
  gap: 14px;
  padding: 14px 28px 29px;
  border-top: 2px solid #ede9fe;
}
.ai-form input {
  flex: 1;
  min-width: 0;
  height: 83px;
  padding: 0 21px;
  background-color: #fbf8ff;
  border: 4px solid #ebe6fd;
  border-radius: 30px;
  font-size: 29px;
}
.ai-form input::placeholder {
  color: #c4b5d0;
  opacity: 1;
}
.ai-form button {
  display: grid;
  place-items: center;
  width: 65px;
  height: 65px;
  padding: 0;
  background: linear-gradient(135deg, #cbb0fa, #b19dbb);
  border: 0;
  border-radius: 22px;
}
.ai-form svg {
  width: 30px;
  height: 30px;
  stroke: #fff;
  stroke-width: 2;
}

/* Чат */
.chat {
  position: fixed;
  right: 64px;
  bottom: 35px;
  width: 108px;
  height: 108px;
  padding: 0;
  background-color: #7a0087;
  border: 0;
  border-radius: 50%;
}
.chat-count {
  position: absolute;
  top: 0;
  right: 0;
  width: 36px;
  background-color: #c01616;
  border-radius: 50%;
  color: #fff;
  font-size: 20px;
  font-weight: normal;
  line-height: 36px;
}
```
